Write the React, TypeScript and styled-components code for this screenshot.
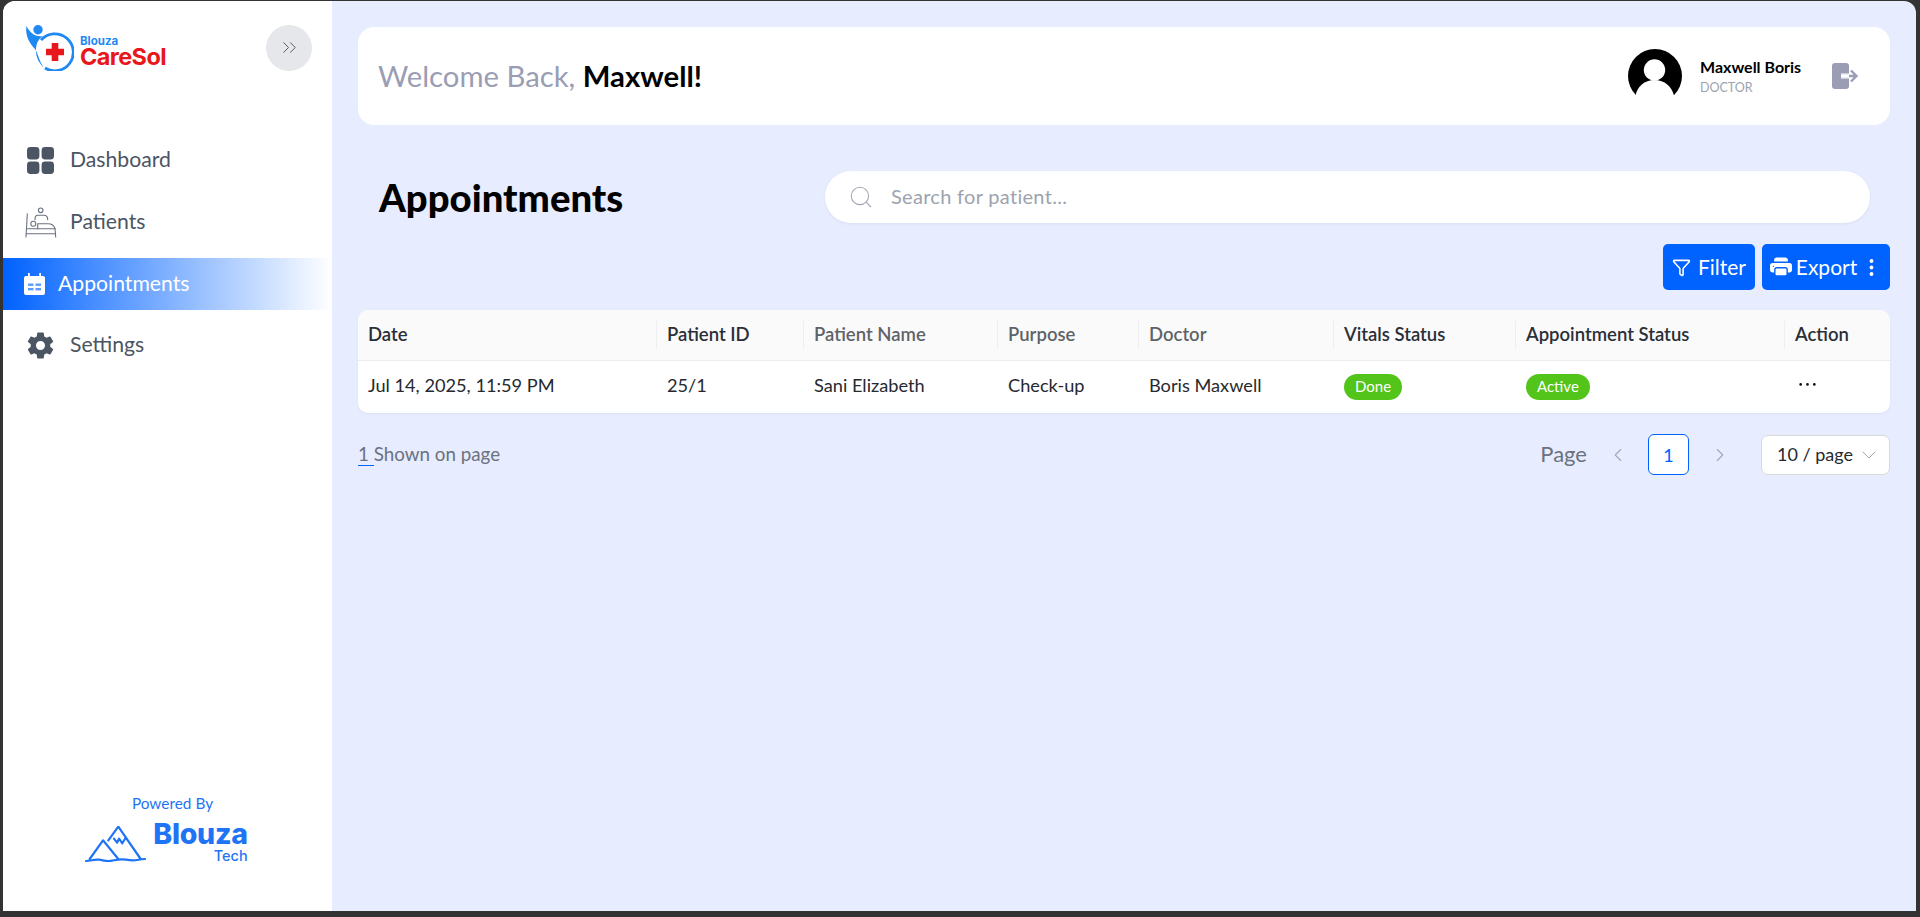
import styled, { createGlobalStyle } from "styled-components";
import { ChevronLeft, ChevronRight, ChevronDown, ChevronsRight, Funnel, Search } from "lucide-react";
import { BsThreeDotsVertical, BsPrinterFill } from "react-icons/bs";
import { AiOutlineEllipsis } from "react-icons/ai";
import { IoSettingsSharp } from "react-icons/io5";

const GlobalStyle = createGlobalStyle`
  html, body {
    margin: 0;
    height: 100%;
    background: #333333;
    overflow: hidden;
  }
  * { box-sizing: border-box; }
`;

const columns = "298px 147px 194px 141px 195px 182px 269px 106px";
const fontStack = `Lato, "Open Sans", sans-serif`;

const headers = [
  { label: "Date" },
  { label: "Patient ID" },
  { label: "Patient Name", muted: true },
  { label: "Purpose", muted: true },
  { label: "Doctor", muted: true },
  { label: "Vitals Status" },
  { label: "Appointment Status" },
  { label: "Action" },
];

const DashboardIcon = () => (
  <svg width="27" height="27" viewBox="0 0 27 27" fill="#4b5563">
    <rect x="0" y="0" width="12.4" height="12.4" rx="3.4" />
    <rect x="14.6" y="0" width="12.4" height="12.4" rx="3.4" />
    <rect x="0" y="14.6" width="12.4" height="12.4" rx="3.4" />
    <rect x="14.6" y="14.6" width="12.4" height="12.4" rx="3.4" />
  </svg>
);

const BedIcon = () => (
  <svg width="32" height="31" viewBox="0 0 32 31" fill="none" stroke="#6b7280" strokeWidth="1.1" strokeLinecap="round" strokeLinejoin="round">
    <circle cx="15.700" cy="3.300" r="2.300" />
    <path d="M10 12.700c0-2.800.6-4.400 2.500-4.400h6.500c2.300 0 3.700 1.900 3.700 4.400" />
    <path d="M2.300 6.700 1 30M30 21.700l.7 8.300" />
    <path d="M1.300 26.700h29.200M1.700 21.700H30" />
    <circle cx="8.300" cy="16.700" r="2.500" />
    <path d="M12.700 16.700H23c3.700 0 6.200 2 7 5M12.700 16.700v5" />
  </svg>
);

const CalendarIcon = () => (
  <svg width="21" height="22" viewBox="0 0 21 22">
    <path
      fill="#ffffff"
      d="M4 0h1.800v3h9.400V0H17v3h2a2 2 0 0 1 2 2v15a2 2 0 0 1-2 2H2a2 2 0 0 1-2-2V5a2 2 0 0 1 2-2h2z"
    />
    <rect x="4" y="10.500" width="5.500" height="2.400" fill="#5f9bff" />
    <rect x="11.500" y="10.500" width="5.500" height="2.400" fill="#5f9bff" />
    <rect x="4" y="15" width="5.500" height="2.400" fill="#5f9bff" />
    <rect x="11.500" y="15" width="5.500" height="2.400" fill="#5f9bff" />
  </svg>
);

const CareLogoMark = () => (
  <svg width="48" height="46" viewBox="0 0 48 46">
    <circle cx="12" cy="4.700" r="4.700" fill="#1e88f5" />
    <path
      fill="#1e88f5"
      d="M.5 1C-1 10 3 18 9 24c3 4 4 12 9 19-5-5-8-11-8-17 0-6 1-11 7-15C11 12 5 10 .5 1z"
    />
    <path
      fill="none"
      stroke="#1e88f5"
      strokeWidth="2.800"
      d="M15 15A18.500 18.500 0 1 1 19 43"
    />
    <path fill="#e8171b" d="M25.700 18h6.600v5.700H38v6.600h-5.700V36h-6.600v-5.700H20v-6.600h5.700z" />
  </svg>
);

const MountainLogo = () => (
  <svg width="61" height="37" viewBox="0 0 61 37" fill="none" stroke="#1f74f5" strokeWidth="2.200" strokeLinejoin="round" strokeLinecap="round">
    <path d="M4.700 33 18 14.300 33.300 33" />
    <path d="M23.300 14.300 33.300.7 55.700 33" />
    <path d="M29 12.700l3 4 2-4 3.300 4.600 3.400-5.600" />
    <path d="M1 35c5 0 8-2 13-1.300s8 2 13 1 8-2 14-1 8 1 11 .3 5-1 8-1" />
  </svg>
);

const AvatarIcon = () => (
  <svg width="54" height="54" viewBox="0 0 54 54">
    <circle cx="27" cy="27" r="27" fill="#000000" />
    <rect y="46" width="54" height="8" fill="#ffffff" />
    <circle cx="26.500" cy="21" r="10.700" fill="#ffffff" />
    <path d="M7.500 47c1.500-9.500 9-16 19-16s17.500 6.500 19.500 16z" fill="#ffffff" />
  </svg>
);

const LogoutIcon = () => (
  <svg width="27" height="28" viewBox="0 0 27 28">
    <rect x="0" y="1" width="17" height="26" rx="3" fill="#9a9db3" />
    <path d="M9 14h15M19 8.500l5.500 5.500-5.500 5.500" fill="none" stroke="#ffffff" strokeWidth="5" />
    <path d="M9 14h15M19 8.500l5.500 5.500-5.500 5.500" fill="none" stroke="#9a9db3" strokeWidth="2.400" />
    <path d="M9 14h8" fill="none" stroke="#ffffff" strokeWidth="2.400" />
  </svg>
);

const App = () => {
  return (
    <>
      <GlobalStyle />
      <Frame>
        <Sidebar>
          <SidebarTop>
            <Logo>
              <CareLogoMark />
              <LogoWords>
                <LogoSmall>Blouza</LogoSmall>
                <LogoBig>CareSol</LogoBig>
              </LogoWords>
            </Logo>
            <CollapseButton>
              <ChevronsRight size={23} strokeWidth={1} color="#4b5563" />
            </CollapseButton>
          </SidebarTop>
          <Nav>
            <NavItem>
              <NavIcon><DashboardIcon /></NavIcon>
              <NavLabel>Dashboard</NavLabel>
            </NavItem>
            <NavItem>
              <NavIcon><BedIcon /></NavIcon>
              <NavLabel>Patients</NavLabel>
            </NavItem>
            <ActiveNavItem>
              <CalendarIcon />
              <NavLabel>Appointments</NavLabel>
            </ActiveNavItem>
            <NavItem>
              <NavIcon><IoSettingsSharp size={29} color="#4b5563" /></NavIcon>
              <NavLabel>Settings</NavLabel>
            </NavItem>
          </Nav>
          <PoweredBy>
            <PoweredLabel>Powered By</PoweredLabel>
            <PoweredLogo>
              <MountainLogo />
              <BrandWords>
                <BrandName>Blouza</BrandName>
                <BrandTech>Tech</BrandTech>
              </BrandWords>
            </PoweredLogo>
          </PoweredBy>
        </Sidebar>
        <Main>
          <HeaderCard>
            <Welcome>
              Welcome Back, <strong>Maxwell!</strong>
            </Welcome>
            <UserBlock>
              <AvatarIcon />
              <UserText>
                <UserName>Maxwell Boris</UserName>
                <UserRole>DOCTOR</UserRole>
              </UserText>
              <LogoutIcon />
            </UserBlock>
          </HeaderCard>
          <TitleRow>
            <PageTitle>Appointments</PageTitle>
            <SearchBar>
              <Search size={26} strokeWidth={1} color="#a3a8b4" />
              <SearchText>Search for patient...</SearchText>
            </SearchBar>
          </TitleRow>
          <Toolbar>
            <ActionButton $wide={false}>
              <Funnel size={19} strokeWidth={2} />
              <ButtonLabel>Filter</ButtonLabel>
            </ActionButton>
            <ActionButton $wide>
              <BsPrinterFill size={22} />
              <ButtonLabel>Export</ButtonLabel>
              <BsThreeDotsVertical size={21} />
            </ActionButton>
          </Toolbar>
          <Table>
            <HeadRow>
              {headers.map((h) => (
                <HeadCell key={h.label} $muted={h.muted}>
                  {h.label}
                </HeadCell>
              ))}
            </HeadRow>
            <BodyRow>
              <BodyCell>Jul 14, 2025, 11:59 PM</BodyCell>
              <BodyCell>25/1</BodyCell>
              <BodyCell>Sani Elizabeth</BodyCell>
              <BodyCell>Check-up</BodyCell>
              <BodyCell>Boris Maxwell</BodyCell>
              <BodyCell><StatusTag>Done</StatusTag></BodyCell>
              <BodyCell><StatusTag>Active</StatusTag></BodyCell>
              <BodyCell><RowMenu size={25} color="#111111" /></BodyCell>
            </BodyRow>
          </Table>
          <TableFooter>
            <ShownText>
              <ShownCount>1 </ShownCount>Shown on page
            </ShownText>
            <Pagination>
              <PageLabel>Page</PageLabel>
              <PageArrow><ChevronLeft size={22} strokeWidth={1.2} /></PageArrow>
              <PageNumber>1</PageNumber>
              <PageArrow><ChevronRight size={22} strokeWidth={1.2} /></PageArrow>
              <PageSize>
                <PageSizeLabel>10 / page</PageSizeLabel>
                <ChevronDown size={24} strokeWidth={1} color="#a3a8b4" />
              </PageSize>
            </Pagination>
          </TableFooter>
        </Main>
      </Frame>
    </>
  );
};

const Frame = styled.div`
  display: flex;
  margin: 1px 4px 0 3px;
  height: 910px;
  border-radius: 12px 12px 0 0;
  overflow: hidden;
  background: #e7ecfe;
  font-family: ${fontStack};
`;

const Sidebar = styled.aside`
  display: flex;
  flex-direction: column;
  flex: 0 0 329px;
  background: #ffffff;
`;

const SidebarTop = styled.div`
  display: flex;
  align-items: center;
  justify-content: space-between;
  padding: 22px 20px 0 23px;
  height: 71px;
`;

const Logo = styled.div`
  display: flex;
  align-items: flex-end;
  gap: 6px;
`;

const LogoWords = styled.div`
  display: flex;
  flex-direction: column;
  font-family: Inter, sans-serif;
  font-weight: 700;
  padding-bottom: 2px;
`;

const LogoSmall = styled.span`
  font-size: 11.5px;
  line-height: 13px;
  margin-bottom: -4px;
  color: #1e88f5;
`;

const LogoBig = styled.span`
  font-size: 23.5px;
  line-height: 25px;
  letter-spacing: -0.6px;
  color: #e8171b;
`;

const CollapseButton = styled.div`
  display: flex;
  align-items: center;
  justify-content: center;
  width: 46px;
  height: 46px;
  border-radius: 50%;
  background: #e5e7eb;
`;

const Nav = styled.nav`
  display: flex;
  flex-direction: column;
  gap: 10px;
  margin-top: 63px;
`;

const NavItem = styled.div`
  display: flex;
  align-items: center;
  height: 51.500px;
  padding-left: 21px;
  gap: 13px;
  color: #4b5563;
  font-size: 21.200px;
`;

const NavLabel = styled.span`
  margin-top: -3px;
`;

const NavIcon = styled.span`
  display: flex;
  align-items: center;
  justify-content: center;
  width: 33px;
`;

const ActiveNavItem = styled.div`
  display: flex;
  align-items: center;
  height: 52px;
  padding-left: 21px;
  gap: 13px;
  color: #ffffff;
  font-size: 21.200px;
  background: linear-gradient(90deg, #0062ff 0%, #ffffff 100%);
`;

const PoweredBy = styled.div`
  display: flex;
  flex-direction: column;
  align-items: center;
  margin-top: auto;
  padding-bottom: 48px;
`;

const PoweredLabel = styled.span`
  padding-left: 10px;
  font-size: 15.400px;
  color: #1f74f5;
  margin-bottom: 8px;
`;

const PoweredLogo = styled.div`
  display: flex;
  align-items: flex-end;
  gap: 7px;
  margin-left: -2px;
`;

const BrandWords = styled.div`
  display: flex;
  flex-direction: column;
  align-items: flex-end;
  font-family: Inter, sans-serif;
  color: #1f74f5;
`;

const BrandName = styled.span`
  font-size: 28.500px;
  line-height: 28px;
  font-weight: 800;
  letter-spacing: -0.3px;
`;

const BrandTech = styled.span`
  font-size: 14.500px;
  line-height: 15px;
  font-weight: 500;
`;

const Main = styled.main`
  flex: 1;
  padding: 26px 26px 0;
`;

const HeaderCard = styled.header`
  display: flex;
  align-items: center;
  justify-content: space-between;
  height: 98px;
  padding: 0 31px 0 20px;
  border-radius: 16px;
  background: #ffffff;
`;

const Welcome = styled.div`
  margin-top: -2px;
  font-size: 29.300px;
  color: #9a9db3;

  strong {
    color: #000000;
    font-weight: 700;
  }
`;

const UserBlock = styled.div`
  display: flex;
  align-items: center;
`;

const UserText = styled.div`
  display: flex;
  flex-direction: column;
  margin: 0 28px 0 18px;
  width: 104px;
`;

const UserName = styled.span`
  font-size: 16px;
  line-height: 22px;
  font-weight: 700;
  color: #000000;
  white-space: nowrap;
`;

const UserRole = styled.span`
  margin-top: 1px;
  font-size: 12.500px;
  line-height: 18px;
  color: #9ca3af;
`;

const TitleRow = styled.div`
  display: flex;
  align-items: center;
  margin-top: 46px;
  height: 52px;
  padding-right: 20px;
`;

const PageTitle = styled.h1`
  flex: 0 0 467px;
  margin: 0;
  padding-left: 21px;
  font-size: 38.300px;
  font-weight: 900;
  color: #000000;
`;

const SearchBar = styled.div`
  display: flex;
  flex: 1;
  align-items: center;
  gap: 17px;
  height: 52px;
  padding-left: 23px;
  border-radius: 26px;
  background: #ffffff;
  box-shadow: 0 1px 3px rgba(60, 70, 120, 0.08);
`;

const SearchText = styled.span`
  margin-top: -2px;
  font-size: 20px;
  letter-spacing: 0.3px;
  color: #9ca3af;
`;

const Toolbar = styled.div`
  display: flex;
  justify-content: flex-end;
  gap: 7px;
  margin-top: 21px;
`;

const ActionButton = styled.div<{ $wide: boolean }>`
  display: flex;
  align-items: center;
  justify-content: center;
  gap: ${(p) => (p.$wide ? "4px" : "7px")};
  width: ${(p) => (p.$wide ? "128px" : "92px")};
  height: 46px;
  border-radius: 5px;
  background: #0062ff;
  color: #ffffff;
  font-size: 21px;
`;

const ButtonLabel = styled.span`
  margin-top: -2px;
`;

const Table = styled.div`
  margin-top: 20px;
  border-radius: 10px;
  overflow: hidden;
  background: #ffffff;
  box-shadow: 0 1px 2px rgba(60, 70, 120, 0.08);
`;

const HeadRow = styled.div`
  display: grid;
  grid-template-columns: ${columns};
  align-items: center;
  height: 51px;
  background: #fafafa;
  border-bottom: 1px solid #ececec;
`;

const HeadCell = styled.div<{ $muted?: boolean }>`
  display: flex;
  align-items: center;
  height: 28px;
  padding: 0 0 2px 10px;
  font-size: 18.500px;
  font-weight: 600;
  color: ${(p) => (p.$muted ? "#5f6368" : "#2b2f38")};
  border-left: 1px solid #efefef;

  &:first-child {
    border-left: none;
  }
`;

const BodyRow = styled.div`
  display: grid;
  grid-template-columns: ${columns};
  align-items: center;
  height: 52px;
`;

const BodyCell = styled.div`
  padding: 0 0 4px 11px;
  font-size: 18.200px;
  color: #26292f;
  display: flex;
  align-items: center;

  &:first-child {
    padding-left: 10px;
  }
`;

const StatusTag = styled.span`
  display: inline-block;
  margin: 2px 0 -2px;
  height: 26px;
  padding: 0 11px;
  border-radius: 13px;
  background: #52c41a;
  color: #ffffff;
  font-size: 15px;
  line-height: 25px;
`;

const RowMenu = styled(AiOutlineEllipsis)`
  margin-bottom: 2px;
`;

const TableFooter = styled.div`
  display: flex;
  align-items: center;
  justify-content: space-between;
  margin-top: 22px;
  height: 39px;
`;

const ShownText = styled.span`
  margin-top: -1px;
  font-size: 18.800px;
  color: #6b7280;
`;

const ShownCount = styled.span`
  display: inline-block;
  white-space: pre;
  border-bottom: 1.500px solid #0062ff;
`;

const Pagination = styled.div`
  display: flex;
  align-items: center;
`;

const PageLabel = styled.span`
  margin-top: -2px;
  font-size: 22px;
  color: #6b7280;
`;

const PageArrow = styled.span`
  display: flex;
  justify-content: center;
  width: 61px;
  color: #a3a8b4;
`;

const PageNumber = styled.span`
  display: flex;
  align-items: center;
  justify-content: center;
  width: 41px;
  height: 41px;
  border: 1px solid #0062ff;
  border-radius: 6px;
  background: #ffffff;
  color: #0062ff;
  font-size: 18px;
`;

const PageSize = styled.div`
  display: flex;
  align-items: center;
  justify-content: space-between;
  width: 129px;
  height: 40px;
  margin-left: 11px;
  padding: 0 8px 0 15px;
  border: 1px solid #d9d9d9;
  border-radius: 7px;
  background: #ffffff;
  color: #26292f;
  font-size: 18px;
`;

const PageSizeLabel = styled.span`
  margin-top: -2px;
`;

export default App;
